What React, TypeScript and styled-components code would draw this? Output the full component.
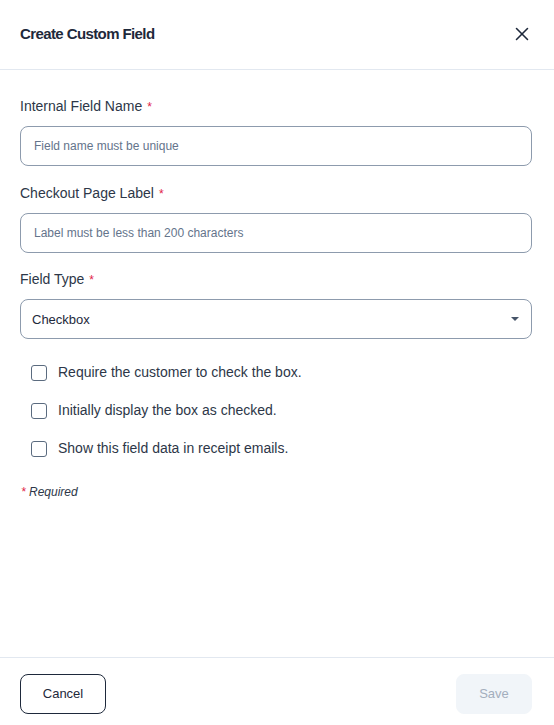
import React from "react";
import styled, { createGlobalStyle } from "styled-components";
import { X } from "lucide-react";

const Global = createGlobalStyle`
  html, body { margin: 0; padding: 0; background: #ffffff; overflow: hidden; }
  * { box-sizing: border-box; }
  body { font-family: "Liberation Sans", Arial, sans-serif; }
`;

const Dialog = styled.div`
  height: 725px;
  display: flex;
  flex-direction: column;
  background: #fff;
`;

const Header = styled.header`
  height: 70px;
  flex: none;
  display: flex;
  align-items: center;
  justify-content: space-between;
  padding: 0 21px 1px 20px;
  border-bottom: 1px solid #e2e8f0;
`;

const Title = styled.h1`
  margin: 0;
  font-size: 15px;
  font-weight: 700;
  letter-spacing: -0.6px;
  color: #1e293b;
  line-height: 20px;
`;

const CloseButton = styled.button`
  width: 22px;
  height: 22px;
  padding: 0;
  border: none;
  background: transparent;
  color: #1e293b;
  display: flex;
  align-items: center;
  justify-content: center;
  cursor: pointer;
`;

const Body = styled.main`
  flex: 1;
  padding: 26px 22px 0 20px;
  display: flex;
  flex-direction: column;
  gap: 16.7px;
`;

const Field = styled.div`
  display: flex;
  flex-direction: column;
`;

const Label = styled.label`
  font-size: 14px;
  line-height: 20px;
  color: #2d3748;
  margin-bottom: 10px;
`;

const Star = styled.span<{ $gap?: number }>`
  color: #e11d48;
  font-size: 12px;
  line-height: 0;
  margin-left: ${(p) => (p.$gap ?? 0)}px;
`;

const Input = styled.input`
  height: 40px;
  width: 100%;
  border: 1px solid #8d9bad;
  border-radius: 8px;
  padding: 0 13px;
  font-family: "Liberation Sans", Arial, sans-serif;
  font-size: 12px;
  color: #1e293b;
  outline: none;
  &::placeholder { color: #64748b; }
`;

const SelectBox = styled.div`
  height: 40px;
  border: 1px solid #8d9bad;
  border-radius: 8px;
  padding: 0 11px 0 11px;
  display: flex;
  align-items: center;
  justify-content: space-between;
  font-size: 13px;
  color: #1e293b;
`;

const Caret = styled.span`
  width: 0;
  height: 0;
  border-left: 4.5px solid transparent;
  border-right: 4.5px solid transparent;
  border-top: 4.5px solid #475569;
  margin-right: 1px;
`;

const CheckList = styled.div`
  display: flex;
  flex-direction: column;
  padding-left: 11px;
  margin-top: -3px;
`;

const CheckRow = styled.label`
  height: 38px;
  display: flex;
  align-items: center;
  gap: 11px;
  font-size: 14px;
  color: #2d3748;
`;

const Box = styled.span`
  width: 16px;
  height: 16px;
  flex: none;
  border: 1.5px solid #5b6b7f;
  border-radius: 3px;
  margin-top: 1px;
`;

const RequiredNote = styled.p`
  margin: 0.5px 0 0 1px;
  font-size: 12px;
  line-height: 16px;
  font-style: italic;
  color: #2d3748;
`;

const Footer = styled.footer`
  flex: none;
  border-top: 1px solid #e2e8f0;
  padding: 16px 22px 11px 20px;
  display: flex;
  justify-content: space-between;
`;

const Button = styled.button<{ $variant: "outline" | "disabled" }>`
  height: 40px;
  border-radius: 8px;
  font-family: "Liberation Sans", Arial, sans-serif;
  font-size: 13px;
  padding: 0 0 1px;
  width: ${(p) => (p.$variant === "outline" ? "86px" : "76px")};
  border: 1px solid ${(p) => (p.$variant === "outline" ? "#1e293b" : "#f1f5f9")};
  background: ${(p) => (p.$variant === "outline" ? "#ffffff" : "#f1f5f9")};
  color: ${(p) => (p.$variant === "outline" ? "#1e293b" : "#a3aebd")};
`;

const checks = [
  "Require the customer to check the box.",
  "Initially display the box as checked.",
  "Show this field data in receipt emails.",
];

export default function App() {
  return (
    <>
      <Global />
      <Dialog>
        <Header>
          <Title>Create Custom Field</Title>
          <CloseButton aria-label="Close">
            <X size={22} strokeWidth={1.7} />
          </CloseButton>
        </Header>
        <Body>
          <Field>
            <Label>
              Internal Field Name<Star $gap={5}>*</Star>
            </Label>
            <Input placeholder="Field name must be unique" />
          </Field>
          <Field>
            <Label>
              Checkout Page Label<Star $gap={5}>*</Star>
            </Label>
            <Input placeholder="Label must be less than 200 characters" />
          </Field>
          <Field>
            <Label>
              Field Type<Star $gap={5}>*</Star>
            </Label>
            <SelectBox>
              <span>Checkbox</span>
              <Caret />
            </SelectBox>
          </Field>
          <CheckList>
            {checks.map((c) => (
              <CheckRow key={c}>
                <Box />
                {c}
              </CheckRow>
            ))}
          </CheckList>
          <RequiredNote>
            <Star>*</Star> Required
          </RequiredNote>
        </Body>
        <Footer>
          <Button $variant="outline">Cancel</Button>
          <Button $variant="disabled" disabled>
            Save
          </Button>
        </Footer>
      </Dialog>
    </>
  );
}
